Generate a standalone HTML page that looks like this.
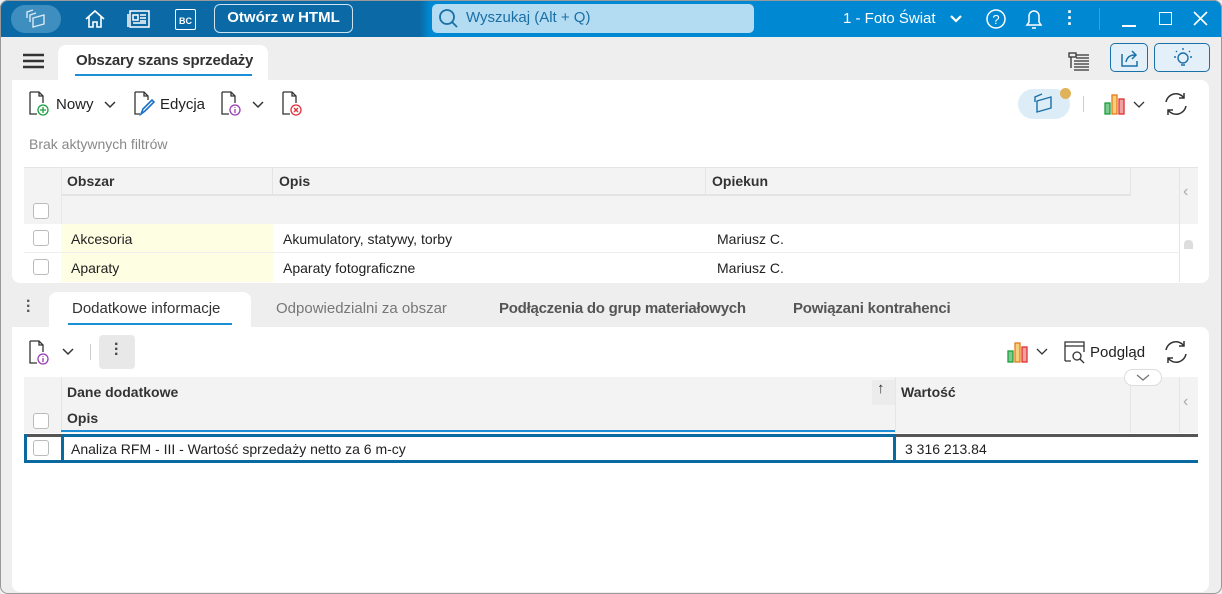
<!DOCTYPE html>
<html><head><meta charset="utf-8"><style>
*{box-sizing:border-box;margin:0;padding:0}
body{width:1222px;height:594px;overflow:hidden;font-family:"Liberation Sans",sans-serif;font-size:14px;color:#222;background:#eee;position:relative}
.abs{position:absolute}
.tb{left:0;top:0;width:1222px;height:37px;background:linear-gradient(90deg,#0b6aa6 0,#0b6aa6 420px,#0089d2 430px,#0089d2 100%);border-radius:8px 8px 0 0}
.w{color:#fff}
.chk{position:absolute;width:16px;height:16px;border:1px solid #bbb;border-radius:3px;background:#fff}
.hd{background:#f3f3f3}
.cell{position:absolute;white-space:nowrap}
.b{font-weight:bold;color:#333}
</style></head><body>
<div class="abs" style="left:0;top:0;width:1222px;height:594px;border:1px solid #999;border-radius:8px;pointer-events:none;z-index:9"></div>
<div class="abs tb"></div>
<div class="abs" style="left:11px;top:5px;width:50px;height:28px;border-radius:14px;background:#3e8ebf"></div>
<svg class="abs" style="left:24px;top:8px" width="24" height="22" fill="none" stroke="#dbeaf4" stroke-width="1.4"><path d="M3 10 L3 4 L9 2 M6 14 L6 7 L12 5 M9 19 L9 10 L20 7 L20 16 Z"/></svg>
<svg class="abs" style="left:84px;top:8px" width="22" height="22" fill="none" stroke="#fff" stroke-width="1.6"><path d="M2 11 L11 3 L20 11 M5 9 V19 H9 V14 H13 V19 H17 V9"/></svg>
<svg class="abs" style="left:127px;top:9px" width="24" height="20" fill="none" stroke="#fff" stroke-width="1.5"><rect x="3" y="2" width="19" height="16"/><path d="M1 5 V18 M6 6 H11 V11 H6 Z M13 6 H19 M13 9 H19 M13 12 H19 M6 14 H19"/></svg>
<div class="abs" style="left:175px;top:9px;width:21px;height:21px;border:1.5px solid #fff;border-radius:2px;color:#fff;font-size:9px;font-weight:bold;text-align:center;line-height:22px">BC</div>
<div class="abs w" style="left:214px;top:4px;width:139px;height:29px;border:1.5px solid #cfe2ef;border-radius:6px;font-weight:bold;font-size:15px;text-align:center;line-height:26px">Otwórz w HTML</div>
<div class="abs" style="left:432px;top:4px;width:322px;height:29px;border-radius:5px;background:#b3dcf2"></div>
<svg class="abs" style="left:438px;top:8px" width="20" height="20" fill="none" stroke="#1a6fa5" stroke-width="1.8"><circle cx="9" cy="9" r="7"/><path d="M14 14 L19 19"/></svg>
<div class="abs" style="left:466px;top:9px;color:#1a6fa5;font-size:15px">Wyszukaj (Alt + Q)</div>
<div class="abs w" style="left:843px;top:10px;font-size:15px">1 - Foto Świat</div>
<svg class="abs" style="left:950px;top:14px" width="12" height="10" fill="none" stroke="#fff" stroke-width="2.2"><path d="M1 2 L6 7 L11 2"/></svg>
<svg class="abs" style="left:985px;top:8px" width="22" height="22" fill="none" stroke="#fff" stroke-width="1.5"><circle cx="11" cy="11" r="9"/><text x="11" y="16" fill="#fff" stroke="none" font-size="13" text-anchor="middle" font-family="Liberation Sans">?</text></svg>
<svg class="abs" style="left:1023px;top:7px" width="22" height="24" fill="none" stroke="#fff" stroke-width="1.5"><path d="M4 18 H18 L16 15 V9 A5 5 0 0 0 6 9 V15 Z M9 21 H13"/></svg>
<div class="abs w" style="left:1067px;top:9px;font-size:18px;line-height:6px;font-weight:bold">·<br>·<br>·</div>
<div class="abs" style="left:1099px;top:8px;width:1px;height:22px;background:#3aa0da"></div>
<div class="abs" style="left:1122px;top:25px;width:14px;height:1.5px;background:#fff"></div>
<div class="abs" style="left:1159px;top:12px;width:13px;height:13px;border:1.5px solid #fff"></div>
<svg class="abs" style="left:1193px;top:11px" width="15" height="15" stroke="#fff" stroke-width="1.6"><path d="M1 1 L14 14 M14 1 L1 14"/></svg>

<svg class="abs" style="left:23px;top:53px" width="22" height="16" stroke="#333" stroke-width="2.4"><path d="M0 2H21M0 8H21M0 14H21"/></svg>
<div class="abs" style="left:58px;top:45px;width:210px;height:36px;background:#fff;border-radius:8px 8px 0 0"></div>
<div class="abs" style="left:76px;top:52px;font-size:15px;color:#333;font-weight:bold;letter-spacing:-0.2px">Obszary szans sprzedaży</div>
<div class="abs" style="left:75px;top:74px;width:177px;height:2px;background:#1a8fd6"></div>
<svg class="abs" style="left:1068px;top:50px" width="22" height="22" stroke="#333" stroke-width="1.3" fill="none"><rect x="1" y="3" width="7" height="4"/><path d="M8 5H21M8 8H21M6 11H21M6 14H21M6 17H21M6 20H21M3 7V18"/></svg>
<div class="abs" style="left:1110px;top:43px;width:38px;height:29px;border:1.3px solid #1a70a8;border-radius:5px;background:#e3f0fa"></div>
<svg class="abs" style="left:1119px;top:47px" width="22" height="22" fill="none" stroke="#1a70a8" stroke-width="1.5"><path d="M3 7V19H18V14M7 15 C8 10 11 8 16 8 M13 4 L17 8 L13 12"/></svg>
<div class="abs" style="left:1154px;top:43px;width:56px;height:29px;border:1.3px solid #1a70a8;border-radius:5px;background:#e3f0fa"></div>
<svg class="abs" style="left:1171px;top:47px" width="24" height="22" fill="none" stroke="#1a70a8" stroke-width="1.4"><circle cx="12" cy="11" r="5"/><path d="M10 18H14M12 1V3M3 10H5M19 10H21M5 4L6 5M19 4L18 5"/></svg>

<div class="abs" style="left:12px;top:80px;width:1197px;height:203px;background:#fff;border-radius:0 8px 8px 8px"></div>
<svg class="abs" style="left:27px;top:91px" width="24" height="26" fill="none" stroke-width="1.3"><path stroke="#333" d="M3 1H12L16 5V12M3 1V23H10M12 1V5H16"/><circle cx="16" cy="19" r="5" stroke="#1a9e3e"/><path stroke="#1a9e3e" d="M16 16V22M13 19H19"/></svg>
<div class="abs" style="left:56px;top:96px;font-size:15px">Nowy</div>
<svg class="abs" style="left:104px;top:101px" width="12" height="8" fill="none" stroke="#333" stroke-width="1.5"><path d="M1 1L6 6L11 1"/></svg>
<svg class="abs" style="left:132px;top:91px" width="24" height="26" fill="none" stroke-width="1.3"><path stroke="#333" d="M3 1H12L16 5V9M3 1V23H8M12 1V5H16"/><path stroke="#1a70c8" stroke-width="1.6" d="M9 23L11 18L20 9L22 11L13 20Z"/></svg>
<div class="abs" style="left:160px;top:96px;font-size:15px">Edycja</div>
<svg class="abs" style="left:219px;top:91px" width="24" height="26" fill="none" stroke-width="1.3"><path stroke="#333" d="M3 1H12L16 5V12M3 1V23H10M12 1V5H16"/><circle cx="16" cy="19" r="5" stroke="#9b3bb5"/><path stroke="#9b3bb5" d="M16 18V22M16 16V16.8"/></svg>
<svg class="abs" style="left:252px;top:101px" width="12" height="8" fill="none" stroke="#333" stroke-width="1.5"><path d="M1 1L6 6L11 1"/></svg>
<svg class="abs" style="left:280px;top:91px" width="24" height="26" fill="none" stroke-width="1.3"><path stroke="#333" d="M3 1H12L16 5V12M3 1V23H10M12 1V5H16"/><circle cx="16" cy="19" r="5" stroke="#e0303a"/><path stroke="#e0303a" d="M14 17L18 21M18 17L14 21"/></svg>
<div class="abs" style="left:1018px;top:89px;width:52px;height:30px;border-radius:15px;background:#dcedf8"></div>
<svg class="abs" style="left:1032px;top:92px" width="24" height="24" fill="none" stroke="#1a70a8" stroke-width="1.4"><path d="M3 10L3 5L10 2M5 19V9L19 5V16L5 20Z"/></svg>
<div class="abs" style="left:1060px;top:88px;width:11px;height:11px;border-radius:6px;background:#e0b35a"></div>
<div class="abs" style="left:1083px;top:96px;width:1px;height:16px;background:#ccc"></div>
<svg class="abs" style="left:1104px;top:93px" width="26" height="22"><rect x="1" y="10" width="5" height="11" fill="#7ec98e" stroke="#1a9e3e" stroke-width="1.3"/><rect x="8" y="2" width="5" height="19" fill="#f5cf7c" stroke="#e67a1a" stroke-width="1.3"/><rect x="15" y="6" width="5" height="15" fill="#f0a2a2" stroke="#e03030" stroke-width="1.3"/></svg>
<svg class="abs" style="left:1133px;top:101px" width="12" height="8" fill="none" stroke="#333" stroke-width="1.3"><path d="M1 1L6 6L11 1"/></svg>
<svg class="abs" style="left:1163px;top:91px" width="26" height="26" fill="none" stroke="#333" stroke-width="1.5"><path d="M3 11A10 10 0 0 1 21 7M21 2V7H16M23 15A10 10 0 0 1 5 19M5 24V19H10"/></svg>
<div class="abs" style="left:29px;top:136px;color:#888;font-size:14px">Brak aktywnych filtrów</div>

<div class="abs hd" style="left:24px;top:167px;width:1174px;height:57px;border-top:1px solid #e4e4e4"></div>
<div class="abs" style="left:61px;top:194px;width:1070px;height:2px;background:#e4e4e4"></div>
<div class="abs" style="left:272px;top:167px;width:1px;height:28px;background:#e4e4e4"></div>
<div class="abs" style="left:705px;top:167px;width:1px;height:28px;background:#e4e4e4"></div>
<div class="abs" style="left:1130px;top:167px;width:1px;height:28px;background:#e4e4e4"></div>
<div class="abs" style="left:1179px;top:167px;width:1px;height:115px;background:#e4e4e4"></div>
<div class="abs" style="left:61px;top:167px;width:1px;height:57px;background:#e8e8e8"></div>
<div class="cell b" style="left:67px;top:173px">Obszar</div>
<div class="cell b" style="left:279px;top:173px">Opis</div>
<div class="cell b" style="left:712px;top:173px">Opiekun</div>
<div class="cell" style="left:1183px;top:183px;color:#aaa;font-size:16px">‹</div>
<div class="chk" style="left:33px;top:203px"></div>
<div class="abs" style="left:61px;top:224px;width:212px;height:58px;background:#fefee2"></div>
<div class="abs" style="left:24px;top:252px;width:1156px;height:1px;background:#eee"></div>
<div class="chk" style="left:33px;top:230px"></div><div class="chk" style="left:33px;top:259px"></div>
<div class="cell" style="left:71px;top:231px">Akcesoria</div>
<div class="cell" style="left:283px;top:231px">Akumulatory, statywy, torby</div>
<div class="cell" style="left:717px;top:231px">Mariusz C.</div>
<div class="cell" style="left:71px;top:260px">Aparaty</div>
<div class="cell" style="left:283px;top:260px">Aparaty fotograficzne</div>
<div class="cell" style="left:717px;top:260px">Mariusz C.</div>
<div class="abs" style="left:1184px;top:240px;width:9px;height:9px;background:#ddd;border-radius:4px 4px 0 0"></div>

<div class="cell" style="left:26px;top:299px;font-size:16px;line-height:5px;font-weight:bold;color:#555">·<br>·<br>·</div>
<div class="abs" style="left:49px;top:292px;width:202px;height:36px;background:#fff;border-radius:8px 8px 0 0"></div>
<div class="cell" style="left:72px;top:300px;font-size:15px;color:#333">Dodatkowe informacje</div>
<div class="abs" style="left:68px;top:323px;width:164px;height:2px;background:#1a8fd6"></div>
<div class="cell" style="left:276px;top:300px;font-size:15px;color:#777">Odpowiedzialni za obszar</div>
<div class="cell" style="left:499px;top:300px;font-size:15px;color:#555;font-weight:bold;letter-spacing:-0.25px">Podłączenia do grup materiałowych</div>
<div class="cell" style="left:793px;top:300px;font-size:15px;color:#555;font-weight:bold;letter-spacing:-0.2px">Powiązani kontrahenci</div>

<div class="abs" style="left:12px;top:327px;width:1197px;height:265px;background:#fff;border-radius:0 8px 8px 8px"></div>
<svg class="abs" style="left:27px;top:340px" width="24" height="26" fill="none" stroke-width="1.3"><path stroke="#333" d="M3 1H12L16 5V12M3 1V23H10M12 1V5H16"/><circle cx="16" cy="19" r="5" stroke="#9b3bb5"/><path stroke="#9b3bb5" d="M16 18V22M16 16V16.8"/></svg>
<svg class="abs" style="left:62px;top:348px" width="12" height="8" fill="none" stroke="#333" stroke-width="1.5"><path d="M1 1L6 6L11 1"/></svg>
<div class="abs" style="left:90px;top:344px;width:1px;height:16px;background:#ccc"></div>
<div class="abs" style="left:99px;top:335px;width:36px;height:34px;background:#e8e8e8;border-radius:4px"></div>
<div class="cell" style="left:114px;top:342px;font-size:16px;line-height:5px;font-weight:bold;color:#444">·<br>·<br>·</div>
<svg class="abs" style="left:1007px;top:341px" width="26" height="22"><rect x="1" y="10" width="5" height="11" fill="#7ec98e" stroke="#1a9e3e" stroke-width="1.3"/><rect x="8" y="2" width="5" height="19" fill="#f5cf7c" stroke="#e67a1a" stroke-width="1.3"/><rect x="15" y="6" width="5" height="15" fill="#f0a2a2" stroke="#e03030" stroke-width="1.3"/></svg>
<svg class="abs" style="left:1036px;top:348px" width="12" height="8" fill="none" stroke="#333" stroke-width="1.3"><path d="M1 1L6 6L11 1"/></svg>
<svg class="abs" style="left:1063px;top:340px" width="24" height="24" fill="none" stroke="#333" stroke-width="1.3"><path d="M2 21V2H21V12M2 6H21M2 21H8"/><circle cx="14" cy="16" r="4"/><path d="M17 19L21 23"/></svg>
<div class="cell" style="left:1090px;top:344px;font-size:15px">Podgląd</div>
<svg class="abs" style="left:1163px;top:339px" width="26" height="26" fill="none" stroke="#333" stroke-width="1.5"><path d="M3 11A10 10 0 0 1 21 7M21 2V7H16M23 15A10 10 0 0 1 5 19M5 24V19H10"/></svg>

<div class="abs hd" style="left:24px;top:377px;width:1174px;height:56px"></div>
<div class="abs" style="left:61px;top:377px;width:1px;height:56px;background:#e6e6e6"></div>
<div class="abs" style="left:895px;top:377px;width:1px;height:56px;background:#e6e6e6"></div>
<div class="abs" style="left:1130px;top:377px;width:1px;height:56px;background:#e6e6e6"></div>
<div class="abs" style="left:1179px;top:377px;width:1px;height:56px;background:#e6e6e6"></div>
<div class="abs" style="left:872px;top:380px;width:23px;height:25px;background:#ececec"></div>
<div class="cell" style="left:877px;top:380px;font-size:15px;color:#333">↑</div>
<div class="abs" style="left:1124px;top:369px;width:38px;height:17px;border:1px solid #ddd;border-radius:9px;background:#fff"></div>
<svg class="abs" style="left:1136px;top:374px" width="14" height="8" fill="none" stroke="#777" stroke-width="1.3"><path d="M1 1L7 6L13 1"/></svg>
<div class="cell b" style="left:67px;top:384px">Dane dodatkowe</div>
<div class="cell b" style="left:67px;top:410px">Opis</div>
<div class="cell b" style="left:901px;top:384px">Wartość</div>
<div class="cell" style="left:1183px;top:393px;color:#aaa;font-size:16px">‹</div>
<div class="chk" style="left:33px;top:413px"></div>
<div class="abs" style="left:61px;top:430px;width:834px;height:2px;background:#1a8fd6"></div>
<div class="abs" style="left:24px;top:434px;width:1174px;height:3px;background:#555"></div>
<div class="abs" style="left:24px;top:460px;width:1174px;height:3px;background:#0a6aa0"></div>
<div class="abs" style="left:24px;top:434px;width:3px;height:29px;background:#0a6aa0"></div>
<div class="abs" style="left:61px;top:434px;width:835px;height:29px;border:3px solid #0a6aa0;background:#fff"></div>
<div class="abs" style="left:61px;top:434px;width:835px;height:3px;background:#0a6aa0"></div>
<div class="chk" style="left:33px;top:440px;background:#fff"></div>
<div class="cell" style="left:71px;top:441px">Analiza RFM - III - Wartość sprzedaży netto za 6 m-cy</div>
<div class="cell" style="left:905px;top:441px">3 316 213.84</div>
</body></html>
